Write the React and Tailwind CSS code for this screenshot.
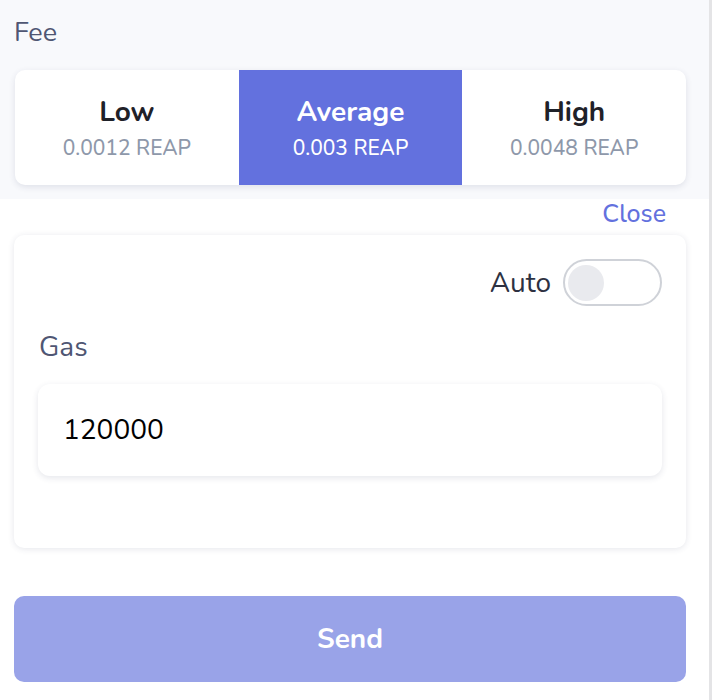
import { useState } from "react";

const fees = [
    { label: "Low", amount: "0.0012 REAP" },
    { label: "Average", amount: "0.003 REAP" },
    { label: "High", amount: "0.0048 REAP" },
];

const App = () => {
    const [selected, setSelected] = useState(1);
    const [auto, setAuto] = useState(false);

    return (
        <div
            className="w-[712px] h-[700px] bg-white border-r-[3px] border-[#e4e4e6] overflow-hidden"
            style={{ fontFamily: "Nunito, 'Open Sans', 'Noto Sans', sans-serif" }}
        >
            {/* Fee section */}
            <div className="bg-[#f8f9fc] pt-[16px] pb-[14px] pl-[14px] pr-[23px]">
                <div className="text-[27px] leading-[34px] text-[#4f5673]">Fee</div>
                <div className="mt-[20px] ml-px grid grid-cols-3 h-[115px] bg-white rounded-[10px] overflow-hidden shadow-[0_2px_6px_rgba(40,50,90,0.12)]">
                    {fees.map((f, i) => (
                        <button
                            key={f.label}
                            onClick={() => setSelected(i)}
                            className={`flex flex-col items-center justify-center ${selected === i ? "bg-[#6371de] text-white" : "text-[#1f2128]"}`}
                        >
                            <span className="text-[28px] leading-[34px] font-bold">{f.label}</span>
                            <span className={`mt-[6px] text-[21px] leading-[26px] font-medium ${selected === i ? "text-white" : "text-[#8e98aa]"}`}>
                                {f.amount}
                            </span>
                        </button>
                    ))}
                </div>
            </div>

            {/* Gas settings */}
            <div className="pl-[14px] pr-[23px]">
                <div className="flex justify-end pr-[20px]">
                    <button className="text-[25px] leading-[30px] font-medium text-[#6371de]">Close</button>
                </div>
                <div className="mt-[6px] bg-white rounded-[10px] shadow-[0_1px_6px_rgba(40,50,90,0.12)] px-[24px] pt-[24px] h-[313px]">
                    <div className="flex items-center justify-end gap-[12px]">
                        <span className="text-[28px] leading-[34px] text-[#2d3142]">Auto</span>
                        <button
                            onClick={() => setAuto(!auto)}
                            className={`w-[99px] h-[47px] rounded-full border-2 border-[#cfd2d8] flex items-center px-[3px] ${auto ? "justify-end bg-[#6371de]" : "justify-start bg-white"}`}
                        >
                            <span className="w-[36px] h-[36px] rounded-full bg-[#e9eaee]" />
                        </button>
                    </div>
                    <div className="mt-[24px] pl-px text-[28px] leading-[34px] text-[#4f5673]">Gas</div>
                    <div className="mt-[20px] h-[92px] rounded-[12px] bg-white shadow-[0_2px_6px_rgba(40,50,90,0.12)] flex items-center px-[25px]">
                        <span className="text-[28px] text-black">120000</span>
                    </div>
                </div>
                <button className="mt-[48px] w-full h-[86px] rounded-[10px] bg-[#99a3e8] text-white text-[28px] font-bold">
                    Send
                </button>
            </div>
        </div>
    );
};

export default App;
